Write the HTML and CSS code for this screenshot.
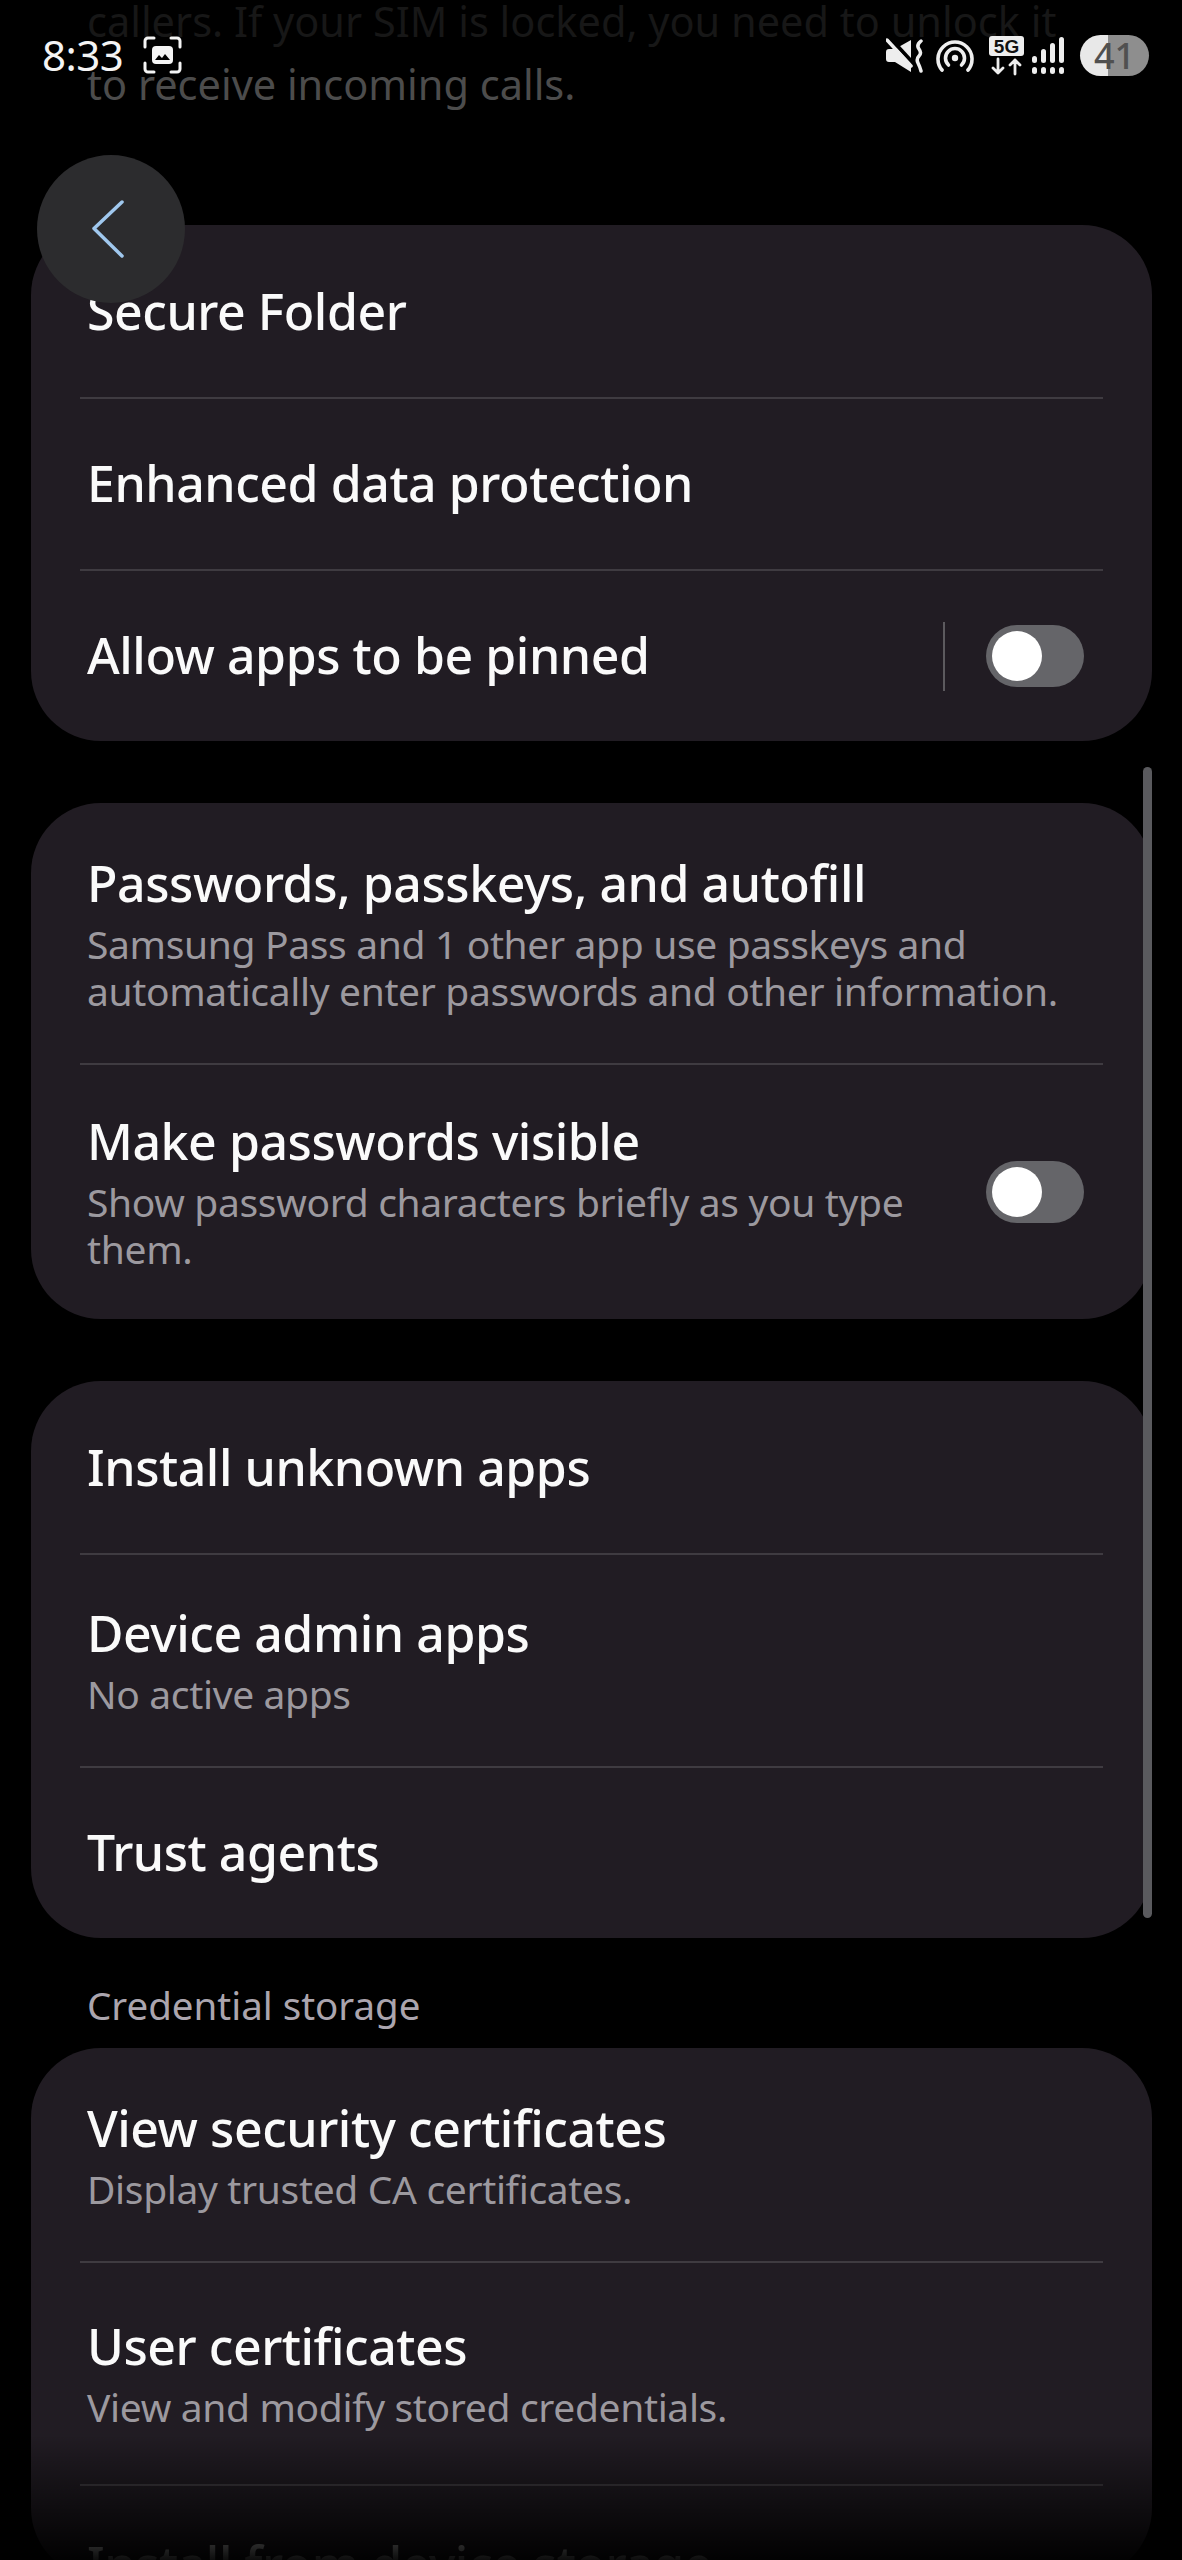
FILE: index.html
```html
<!DOCTYPE html>
<html lang="en">
<head>
    <meta charset="UTF-8">
    <meta name="viewport" content="width=device-width, initial-scale=1.0">
    <title>Other security settings</title>
    <link rel="stylesheet" href="styles.css">
</head>
<body>
<div class="page">

    <div class="content">
        <p class="intro">
            <span class="intro-far">callers. If your SIM is locked, you need to unlock it</span>
            <span class="intro-near">to receive incoming calls.</span>
        </p>

        <div class="card">
            <div class="row"><h3>Secure Folder</h3></div>
            <div class="row"><h3>Enhanced data protection</h3></div>
            <div class="row row-switch">
                <h3>Allow apps to be pinned</h3>
                <span class="vline"></span>
                <span class="toggle"><span class="knob"></span></span>
            </div>
        </div>

        <div class="card">
            <div class="row">
                <h3>Passwords, passkeys, and autofill</h3>
                <p>Samsung Pass and 1 other app use passkeys and<br>automatically enter passwords and other information.</p>
            </div>
            <div class="row row-switch">
                <div class="row-text">
                    <h3>Make passwords visible</h3>
                    <p>Show password characters briefly as you type<br>them.</p>
                </div>
                <span class="toggle"><span class="knob"></span></span>
            </div>
        </div>

        <div class="card">
            <div class="row"><h3>Install unknown apps</h3></div>
            <div class="row">
                <h3>Device admin apps</h3>
                <p>No active apps</p>
            </div>
            <div class="row"><h3>Trust agents</h3></div>
        </div>

        <h4 class="section-title">Credential storage</h4>

        <div class="card card-cut">
            <div class="row">
                <h3>View security certificates</h3>
                <p>Display trusted CA certificates.</p>
            </div>
            <div class="row row-tall">
                <h3>User certificates</h3>
                <p>View and modify stored credentials.</p>
            </div>
            <div class="row row-last"><h3>Install from device storage</h3></div>
        </div>
    </div>

    <div class="statusbar">
        <div class="status-left">
            <span class="time">8:33</span>
            <svg class="shot-icon" width="39" height="38" viewBox="0 0 39 38">
                <path d="M2 11V5a3 3 0 0 1 3-3h6M28 2h6a3 3 0 0 1 3 3v6M37 27v6a3 3 0 0 1-3 3h-6M11 36H5a3 3 0 0 1-3-3v-6" fill="none" stroke="#f4f4f4" stroke-width="3" stroke-linecap="round"/>
                <rect x="9" y="10" width="21" height="18" rx="4" fill="#f4f4f4"/>
                <path d="M12 24l4-5 3 3 3-4 5 6z" fill="#000"/>
            </svg>
        </div>
        <div class="status-right">
            <svg width="38" height="36" viewBox="0 0 38 36">
                <path d="M0 14q0-3 3-3h6L25 2v32L9 24H3q-3 0-3-3z" fill="#eee"/>
                <path d="M3 -1l24 26" stroke="#000" stroke-width="4"/>
                <path d="M1 2l24 26" stroke="#eee" stroke-width="3.5" stroke-linecap="round"/>
                <path d="M35 3q-5 4-2 8t0 7-1 7 3 8" fill="none" stroke="#eee" stroke-width="3.5" stroke-linecap="round"/>
            </svg>
            <svg width="38" height="34" viewBox="0 0 38 34">
                <path d="M6 31A17 17 0 1 1 32 31" fill="none" stroke="#eee" stroke-width="3.6" stroke-linecap="round"/>
                <path d="M12.500 26A9.500 9.500 0 1 1 25.500 26" fill="none" stroke="#eee" stroke-width="3.600" stroke-linecap="round"/>
                <circle cx="19" cy="19" r="3.200" fill="#eee"/>
            </svg>
            <svg class="icon-5g" width="35" height="40" viewBox="0 0 35 40">
                <rect x="0" y="0" width="35" height="20" rx="3" fill="#eee"/>
                <text x="17.500" y="17" text-anchor="middle" class="five-g">5G</text>
                <path d="M9 23v14M4 32l5 5 5-5M26 38V24M21 29l5-5 5 5" fill="none" stroke="#eee" stroke-width="2.800" stroke-linecap="round" stroke-linejoin="round"/>
            </svg>
            <svg class="icon-signal" width="34" height="38" viewBox="0 0 34 38">
                <g fill="#eee">
                    <rect x="1" y="19" width="5" height="7" rx="2.500"/>
                    <rect x="10" y="12" width="5" height="14" rx="2.500"/>
                    <rect x="19" y="6" width="5" height="20" rx="2.500"/>
                    <rect x="28" y="0" width="5" height="26" rx="2.500"/>
                    <rect x="1" y="30" width="5" height="7" rx="2.500"/>
                    <rect x="10" y="30" width="5" height="7" rx="2.500"/>
                    <rect x="19" y="30" width="5" height="7" rx="2.500"/>
                    <rect x="28" y="30" width="5" height="7" rx="2.500"/>
                </g>
            </svg>
            <div class="battery">41</div>
        </div>
    </div>

    <button class="back-btn">
        <svg width="36" height="60" viewBox="0 0 36 60">
            <path d="M31 3L3 29.500 31 57" fill="none" stroke="#a0c8ee" stroke-width="3.500" stroke-linecap="round" stroke-linejoin="round"/>
        </svg>
    </button>

    <div class="scrollbar"></div>
    <div class="bottom-fade"></div>
</div>
</body>
</html>
```

FILE: styles.css
```css
* {
    margin: 0;
    padding: 0;
    box-sizing: border-box;
}

body {
    background: #000;
    font-family: "Noto Sans", sans-serif;
    color: #fafafa;
}

.page {
    position: relative;
    width: 1182px;
    height: 2560px;
    overflow: hidden;
    background: #000;
}

/* status bar */
.statusbar {
    position: absolute;
    top: 35px;
    left: 42px;
    right: 33px;
    display: flex;
    justify-content: space-between;
    align-items: flex-start;
}

.status-left {
    display: flex;
    align-items: center;
    gap: 20px;
}

.time {
    font-size: 42px;
    line-height: 40px;
    color: #f4f4f4;
    letter-spacing: -0.5px;
}

.status-right {
    display: flex;
    align-items: center;
    gap: 12px;
}

.icon-5g {
    margin-left: 3px;
}

.icon-signal {
    margin-left: -5px;
}

.five-g {
    font-family: "Liberation Sans", sans-serif;
    font-size: 19px;
    font-weight: bold;
    fill: #111;
}

.battery {
    width: 69px;
    height: 41px;
    margin-left: 3px;
    border-radius: 21px;
    background: linear-gradient(to right, #e8e8e8 41%, #8e8e8e 41%);
    color: #505050;
    font-size: 36px;
    font-weight: 500;
    line-height: 41px;
    text-align: center;
}

/* floating back button */
.back-btn {
    position: absolute;
    top: 155px;
    left: 37px;
    width: 148px;
    height: 148px;
    border: none;
    border-radius: 50%;
    background: #2c2c2e;
    display: flex;
    align-items: center;
    justify-content: center;
    padding-right: 5px;
}

/* scrolled list */
.content {
    padding: 0 31px;
}

.intro {
    margin-top: -10px;
    height: 235px;
    padding: 0 56px;
    font-size: 41.500px;
    line-height: 63px;
}

.intro span {
    display: block;
    white-space: nowrap;
}

.intro-far {
    color: #171717;
}

.intro-near {
    color: #4c4c4c;
}

.card {
    width: 1121px;
    margin-bottom: 62px;
    background: #211c23;
    border-radius: 70px;
}

.card-cut {
    height: 530px;
    margin-bottom: 0;
    overflow: hidden;
}

.row {
    position: relative;
    min-height: 172px;
    padding: 49px 56px;
    display: flex;
    flex-direction: column;
    justify-content: center;
}

.row + .row::before {
    content: "";
    position: absolute;
    top: 0;
    left: 49px;
    right: 49px;
    height: 2px;
    background: #3f3b41;
}

.row-tall {
    min-height: 223px;
}

.row-last {
    justify-content: flex-start;
}

.row-switch {
    flex-direction: row;
    justify-content: flex-start;
    align-items: center;
    padding-top: 47px;
    padding-bottom: 47px;
    padding-right: 68px;
}

.row-switch h3,
.row-text {
    flex: 1;
}

.row h3 {
    font-size: 50px;
    line-height: 62px;
    font-weight: 500;
    letter-spacing: -0.45px;
    color: #fafafa;
    white-space: nowrap;
}

.row p {
    margin-top: 6px;
    font-size: 39px;
    line-height: 47px;
    letter-spacing: -0.35px;
    color: #9c999f;
    white-space: nowrap;
}

.vline {
    width: 2px;
    height: 69px;
    margin-top: 2px;
    margin-right: 41px;
    background: #5c5a5e;
}

.toggle {
    width: 98px;
    height: 62px;
    margin-top: 2px;
    padding: 6px;
    border-radius: 31px;
    background: #656569;
}

.knob {
    display: block;
    width: 50px;
    height: 50px;
    border-radius: 50%;
    background: #fff;
}

.section-title {
    margin-top: -22px;
    margin-bottom: 15px;
    padding: 0 56px;
    font-size: 38.500px;
    line-height: 55px;
    font-weight: 400;
    color: #aba5ae;
}

.scrollbar {
    position: absolute;
    top: 767px;
    left: 1143px;
    width: 9px;
    height: 1151px;
    border-radius: 5px;
    background: #5a5a5e;
}

.bottom-fade {
    position: absolute;
    left: 0;
    right: 0;
    bottom: 0;
    height: 125px;
    background: linear-gradient(to bottom, rgba(0, 0, 0, 0), rgba(0, 0, 0, 0.95));
}
```
